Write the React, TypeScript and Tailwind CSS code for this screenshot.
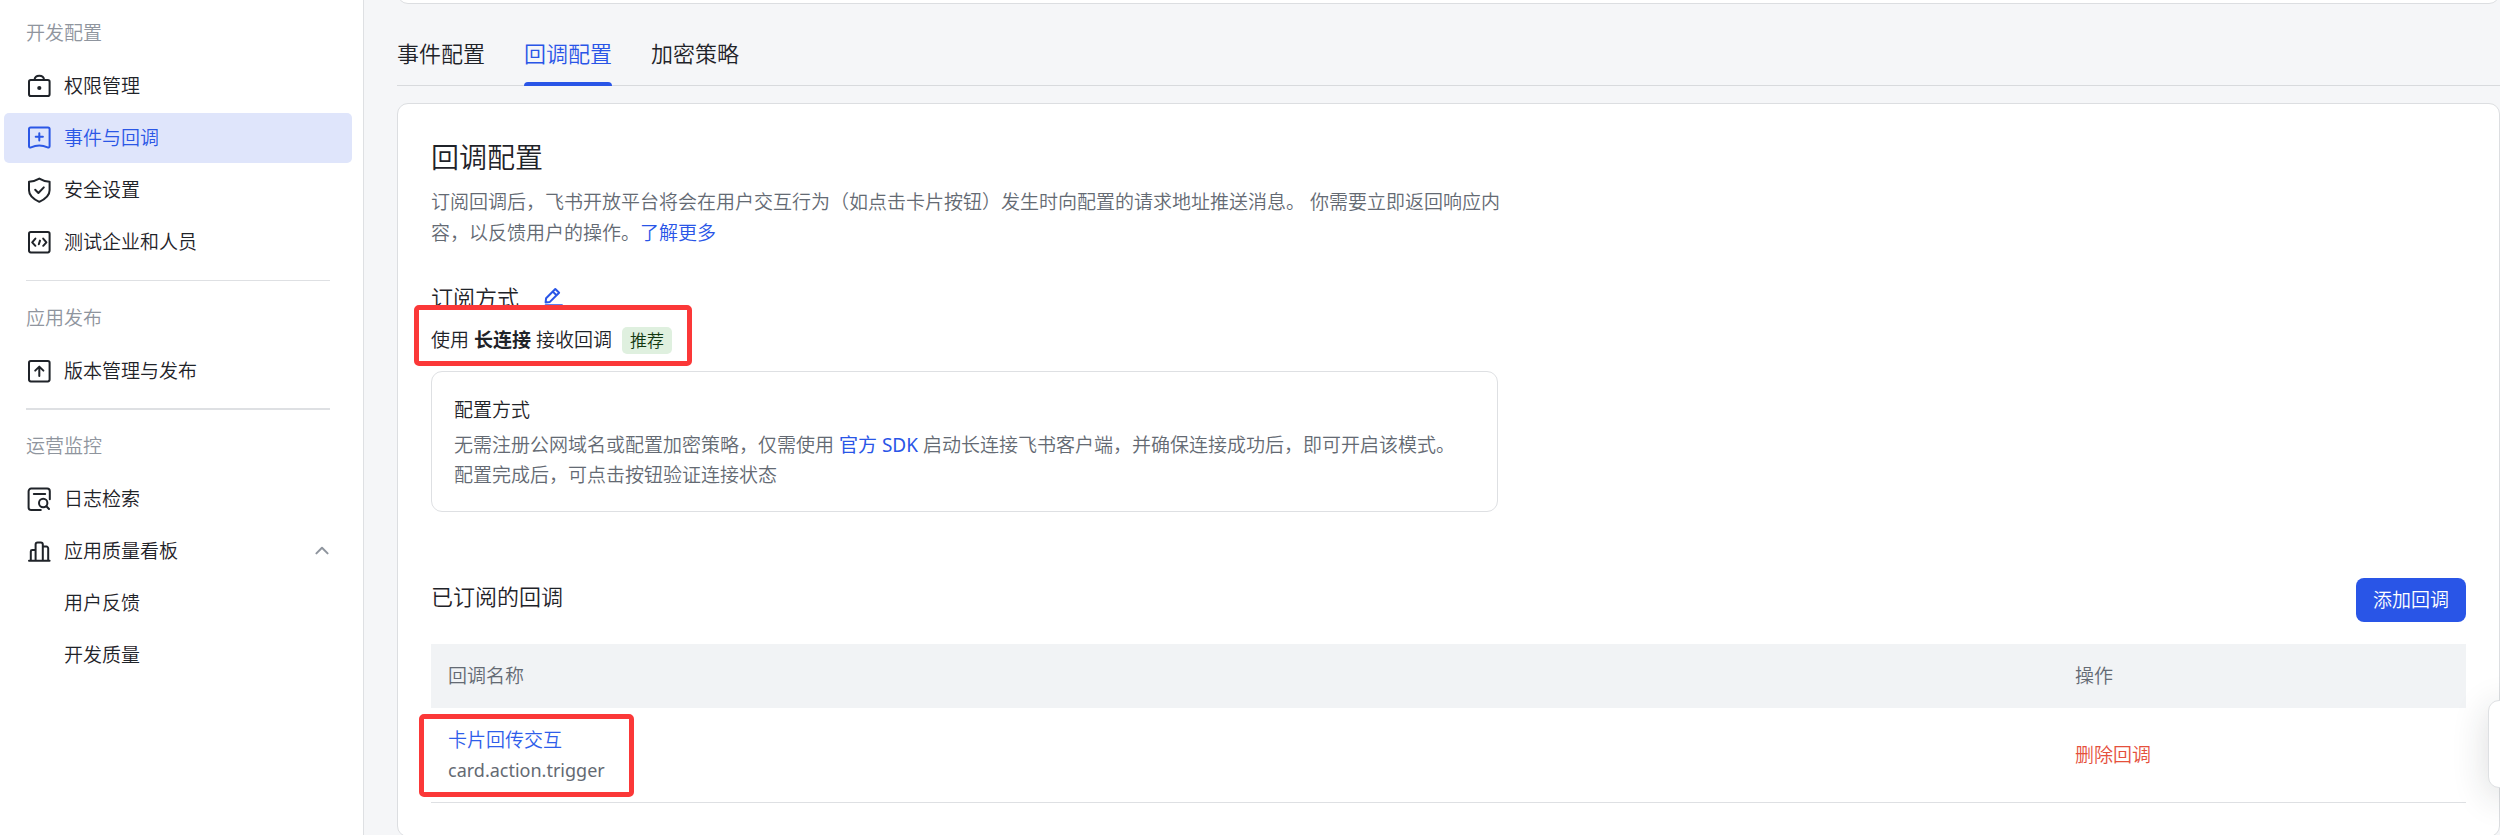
import React from "react";

const svgProps = {
  width: 28,
  height: 28,
  viewBox: "0 0 28 28",
  fill: "none",
  stroke: "currentColor",
  strokeWidth: 2,
  strokeLinecap: "round" as const,
  strokeLinejoin: "round" as const,
  "aria-hidden": true,
  className: "shrink-0",
};

const LockIcon = () => (
  <svg {...svgProps}>
    <rect x="4" y="8" width="20.6" height="16" rx="1.8" />
    <path d="M9.5 7.8C9.8 5.2 11.7 3.8 14.3 3.8s4.5 1.4 4.8 4" />
    <circle cx="14.3" cy="16" r="2.1" fill="currentColor" stroke="none" />
  </svg>
);

const EventIcon = () => (
  <svg {...svgProps}>
    <path d="M5.6 3.4h17.4a1.6 1.6 0 0 1 1.6 1.6v17.2c0 1.1-1 1.6-2 1.2-5.3-2.3-11.3-2.3-16.6 0-1 .4-2-.1-2-1.2V5a1.6 1.6 0 0 1 1.6-1.6Z" />
    <path d="M14.3 9.2v7.2M10.7 12.8h7.2" />
  </svg>
);

const ShieldIcon = () => (
  <svg {...svgProps}>
    <path d="M14.3 2.6c3.3 2 6.8 2.9 10.3 3.2v8.4c0 5.2-4.7 9-10.3 11.6-5.6-2.6-10.3-6.4-10.3-11.6V5.8c3.5-.3 7-1.2 10.3-3.2Z" />
    <path d="m10.2 13.8 3.2 3.2 5.4-5.6" />
  </svg>
);

const CodeIcon = () => (
  <svg {...svgProps}>
    <rect x="4" y="4" width="20.6" height="20.4" rx="1.8" />
    <path d="M10.4 10.6 7.2 14.3l3.2 3.5M18.2 10.6l3.2 3.7-3.2 3.5M15 12.6l-1.2 3.6" />
  </svg>
);

const ReleaseIcon = () => (
  <svg {...svgProps}>
    <rect x="4" y="4" width="20.6" height="20.4" rx="1.8" />
    <path d="M14.3 19V9.8M10.2 13.6l4.1-4 4.1 4" />
  </svg>
);

const LogIcon = () => (
  <svg {...svgProps}>
    <path d="M15.8 25H6.2a2.6 2.6 0 0 1-2.6-2.6V6.2a2.6 2.6 0 0 1 2.6-2.6h16a2.6 2.6 0 0 1 2.6 2.6v8" />
    <path d="M8.8 9h11.4" />
    <circle cx="18.2" cy="18" r="4.2" />
    <path d="m21.4 21.2 2.6 2.8" />
  </svg>
);

const ChartIcon = () => (
  <svg {...svgProps}>
    <path d="M4 23.8h20.6M5.8 23.6v-9.2a1.4 1.4 0 0 1 1.4-1.4h3.4M10.6 23.6V7.4a2 2 0 0 1 2-2h3.2a2 2 0 0 1 2 2v16.2M17.8 9.6h3.6a1.8 1.8 0 0 1 1.8 1.8v12.2" />
  </svg>
);

type ItemProps = {
  icon?: React.ReactNode;
  label: string;
  active?: boolean;
  expanded?: boolean;
};

const NavItem = ({ icon, label, active, expanded }: ItemProps) => (
  <li>
    <a
      href="#"
      aria-current={active ? "page" : undefined}
      className={`flex h-[50px] items-center rounded-[5px] pl-[21px] pr-[22px] ${
        active ? "bg-[#dfe5fb] text-[#2b57e6]" : "text-[#1f2329]"
      }`}
    >
      {icon ?? <span className="w-7 shrink-0" />}
      <span className="ml-[11px]">{label}</span>
      {expanded && (
        <svg
          width="16"
          height="16"
          viewBox="0 0 16 16"
          fill="none"
          stroke="#8f959e"
          strokeWidth="2"
          strokeLinecap="round"
          strokeLinejoin="round"
          aria-hidden="true"
          className="ml-auto"
        >
          <path d="M2.4 10.4 8 4.8l5.6 5.6" />
        </svg>
      )}
    </a>
  </li>
);

const NavSection = ({
  title,
  className = "",
  children,
}: {
  title: string;
  className?: string;
  children: React.ReactNode;
}) => (
  <section className={className}>
    <h2 className="mb-4 pl-[22px] leading-6 text-[#8f959e]">{title}</h2>
    <ul className="flex flex-col gap-0.5">{children}</ul>
  </section>
);

const tabs = ["事件配置", "回调配置", "加密策略"];

export default function App() {
  return (
    <div
      lang="zh-CN"
      className="relative flex h-screen overflow-hidden bg-[#f5f6f8] font-['Noto_Sans','Noto_Sans_CJK_SC',sans-serif] text-[19px] font-[350] text-[#1f2329]"
    >
      <nav className="w-[364px] shrink-0 border-r border-[#dee0e3] bg-white pl-1 pr-[11px] pt-[21px]">
        <NavSection title="开发配置">
          <NavItem icon={<LockIcon />} label="权限管理" />
          <NavItem icon={<EventIcon />} label="事件与回调" active />
          <NavItem icon={<ShieldIcon />} label="安全设置" />
          <NavItem icon={<CodeIcon />} label="测试企业和人员" />
        </NavSection>
        <hr className="mx-[22px] mt-[13px] border-t border-[#dee0e3]" />
        <NavSection title="应用发布" className="mt-[25px]">
          <NavItem icon={<ReleaseIcon />} label="版本管理与发布" />
        </NavSection>
        <hr className="mx-[22px] mt-3 border-t-2 border-[#dee0e3]" />
        <NavSection title="运营监控" className="mt-6">
          <NavItem icon={<LogIcon />} label="日志检索" />
          <NavItem icon={<ChartIcon />} label="应用质量看板" expanded />
          <NavItem label="用户反馈" />
          <NavItem label="开发质量" />
        </NavSection>
      </nav>

      <main className="min-w-0 flex-1 pl-[33px]">
        <div className="h-1 overflow-hidden">
          <div className="-mt-8 h-9 rounded-[11px] border border-[#dcdee1] bg-white" />
        </div>

        <div role="tablist" className="flex h-[82px] gap-[39px] border-b border-[#d8dadd] text-[22px]">
          {tabs.map((tab) => {
            const active = tab === "回调配置";
            return (
              <button
                key={tab}
                type="button"
                role="tab"
                aria-selected={active}
                className={`relative -mb-px pb-[17px] pt-[33px] leading-8 ${active ? "text-[#2955e7]" : ""}`}
              >
                {tab}
                {active && <span className="absolute inset-x-0 bottom-0 h-1 rounded-t bg-[#2955e7]" />}
              </button>
            );
          })}
        </div>

        <section className="mt-[17px] rounded-[11px] border border-[#dcdee1] bg-white p-[33px]">
          <h1 className="text-[28px] leading-10">回调配置</h1>
          <p className="mt-2.5 max-w-[1090px] leading-[31px] text-[#646a73]">
            订阅回调后，飞书开放平台将会在用户交互行为（如点击卡片按钮）发生时向配置的请求地址推送消息。 你需要立即返回响应内
            <br />
            容，以反馈用户的操作。
            <a href="#" className="text-[#2955e7]">了解更多</a>
          </p>

          <div className="mt-8 flex h-8 items-center">
            <h2 className="text-[22px] leading-8">订阅方式</h2>
            <button type="button" aria-label="编辑订阅方式" className="ml-6 text-[#2955e7]">
              <svg width="20" height="20" viewBox="0 0 20 20" fill="none" stroke="currentColor" strokeWidth="2" strokeLinejoin="round" strokeLinecap="round" aria-hidden="true">
                <path d="m2.6 15.4.5-4.2 9.2-9.2 3.8 3.7-9.2 9.2-4.3.5ZM9.8 4.6l3.7 3.7M2.6 18.2h16.4" />
              </svg>
            </button>
          </div>

          <div className="relative mt-[11px] flex h-8 items-center">
            <span className="whitespace-pre">
              使用 <strong className="font-bold">长连接</strong> 接收回调
            </span>
            <span className="ml-2.5 rounded-[5px] bg-[#dff0df] px-2 text-[17px] leading-[27px] text-[#12380f]">推荐</span>
            <div className="pointer-events-none absolute -left-[17px] -top-[19px] h-[61px] w-[278px] rounded-[5px] border-[5px] border-[#fb3838]" />
          </div>

          <div className="mt-[15px] max-w-[1067px] rounded-[11px] border border-[#dee0e3] pb-[21px] pl-[22px] pr-5 pt-[22px]">
            <h3 className="leading-8">配置方式</h3>
            <p className="mt-1 leading-[30px] text-[#646a73]">
              无需注册公网域名或配置加密策略，仅需使用{" "}
              <a href="#" className="font-normal text-[#2955e7]">官方 SDK</a> 启动长连接飞书客户端，并确保连接成功后，即可开启该模式。
              <br />
              配置完成后，可点击按钮验证连接状态
            </p>
          </div>

          <div className="mt-[66px] flex items-start justify-between">
            <h2 className="text-[22px] leading-9">已订阅的回调</h2>
            <button type="button" className="h-11 rounded-lg bg-[#2955e7] px-[17px] text-white">
              添加回调
            </button>
          </div>

          <table className="mt-[22px] w-full table-fixed border-collapse text-left">
            <colgroup>
              <col className="w-4/5" />
              <col className="w-1/5" />
            </colgroup>
            <thead>
              <tr className="h-16 bg-[#f1f3f5] text-[#646a73]">
                <th className="px-[17px] font-[350]">回调名称</th>
                <th className="px-4 font-[350]">操作</th>
              </tr>
            </thead>
            <tbody>
              <tr className="h-[94px] border-b border-[#dee0e3]">
                <td className="px-[17px] leading-[30px]">
                  <div className="relative">
                    <a href="#" className="block text-[#2f5eea]">卡片回传交互</a>
                    <span className="block text-[18px] font-normal text-[#646a73]">card.action.trigger</span>
                    <div className="pointer-events-none absolute -left-[29px] -top-[11px] h-[83px] w-[215px] rounded-[5px] border-[5px] border-[#fb3838]" />
                  </div>
                </td>
                <td className="px-4">
                  <button type="button" className="text-[#e5503c]">删除回调</button>
                </td>
              </tr>
            </tbody>
          </table>
        </section>
      </main>

      <aside className="absolute -right-7 top-[700px] h-[88px] w-10 rounded-[11px] border border-[#dee0e3] bg-white shadow-[0_8px_36px_rgba(31,35,41,0.16)]" />
    </div>
  );
}
